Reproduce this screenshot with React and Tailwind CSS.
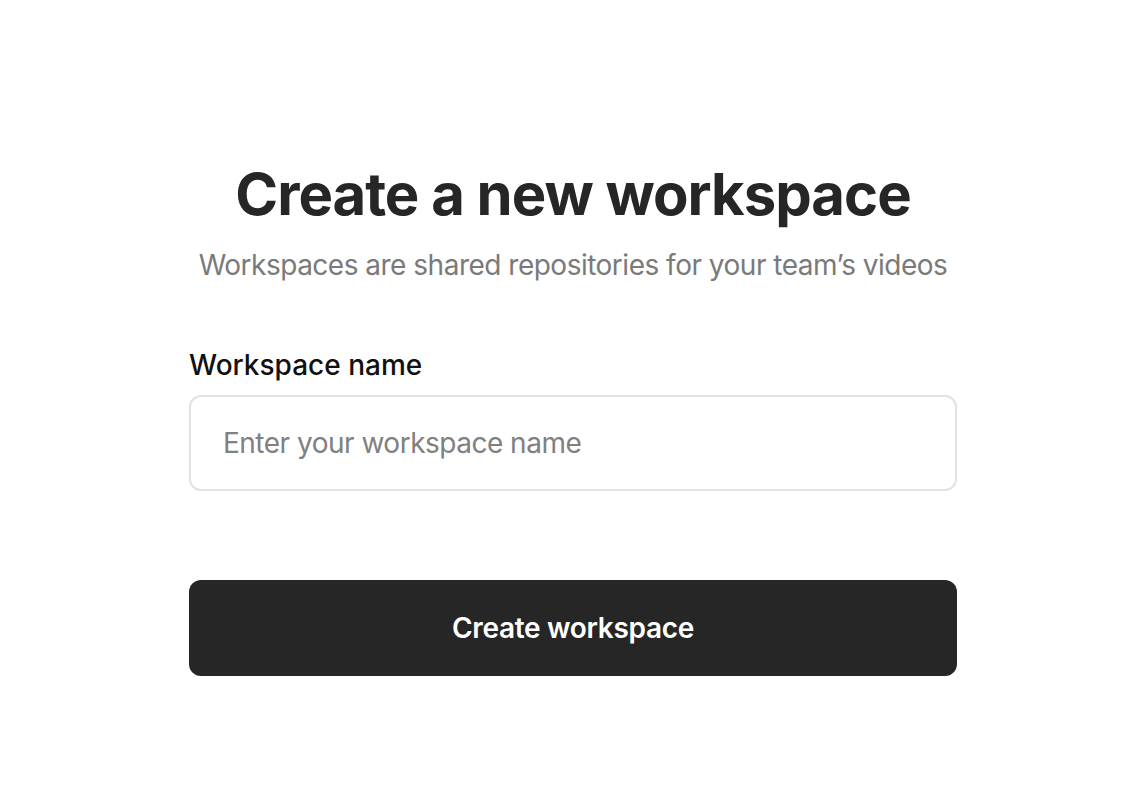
import React, { useState } from "react";

const font = { fontFamily: "Inter, 'Noto Sans', sans-serif" };

export default function App() {
  const [name, setName] = useState("");

  return (
    <div className="min-h-screen bg-white flex justify-center" style={font}>
      <div className="w-[768px] pt-[158px] ml-[4px] flex flex-col">
        <h1 className="text-center text-[58px] leading-[72px] font-bold tracking-[-1px] text-[#262626]">
          Create a new workspace
        </h1>
        <p className="mt-[17px] text-center whitespace-nowrap text-[28px] leading-[36px] tracking-[-0.5px] text-[#7a7a7a]">
          Workspaces are shared repositories for your team’s videos
        </p>

        <label className="mt-[64px] text-[28px] leading-[36px] font-medium text-[#111]">
          Workspace name
        </label>
        <input
          value={name}
          onChange={(e) => setName(e.target.value)}
          placeholder="Enter your workspace name"
          className="mt-[12px] h-[96px] w-full rounded-[12px] border-2 border-[#e2e2e4] px-[32px] text-[28px] tracking-[-0.5px] text-[#262626] placeholder:text-[#808080] outline-none"
        />

        <button className="mt-[89px] h-[96px] w-full rounded-[12px] bg-[#262626] text-white text-[28px] font-semibold tracking-[-0.3px]">
          Create workspace
        </button>
      </div>
    </div>
  );
}
